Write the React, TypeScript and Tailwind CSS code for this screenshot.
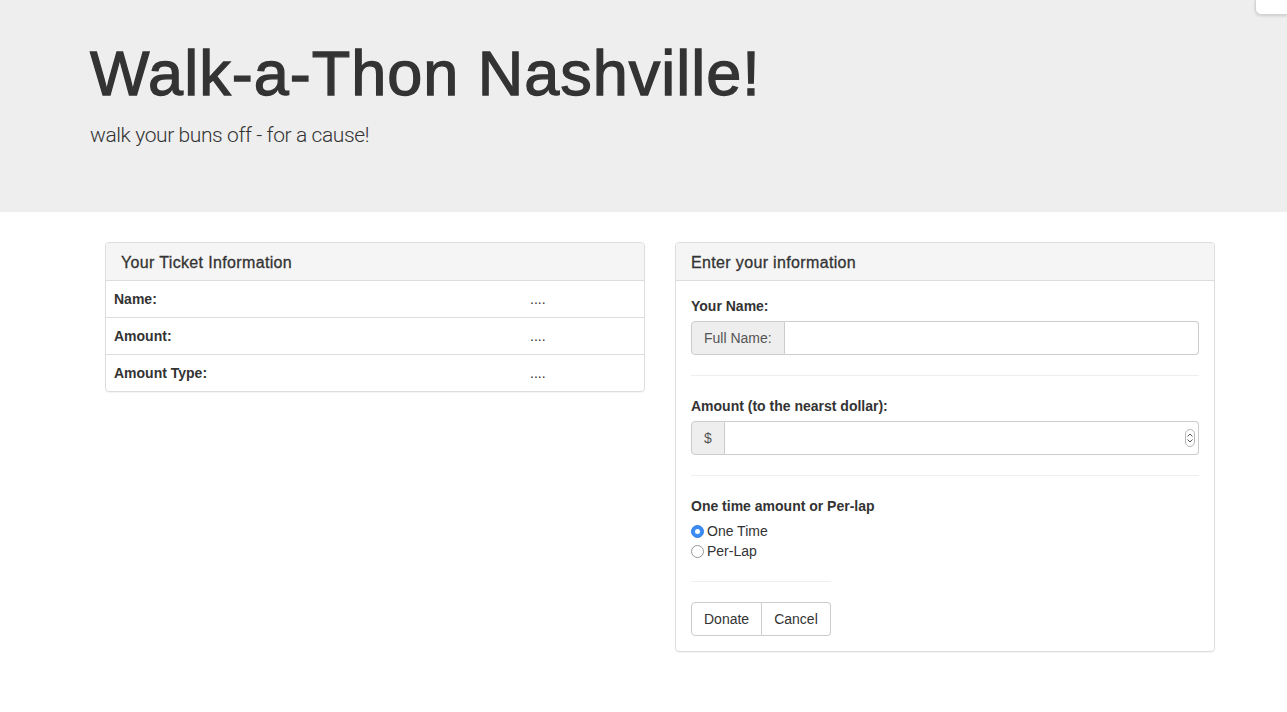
import React from 'react'

// Walk-a-Thon donation page

const font = { fontFamily: '"Liberation Sans", Arial, Helvetica, sans-serif' }

const Radio = ({ checked, label }: { checked?: boolean; label: string }) => (
  <label className="flex items-center h-5 leading-5">
    {checked ? (
      <span className="w-[13px] h-[13px] rounded-full bg-[#3b8cf5] border border-[#2f7de6] flex items-center justify-center mr-[3px]">
        <span className="w-[5px] h-[5px] rounded-full bg-white"></span>
      </span>
    ) : (
      <span className="w-[13px] h-[13px] rounded-full bg-white border border-[#9a9a9a] mr-[3px]"></span>
    )}
    <span>{label}</span>
  </label>
)

const Spinner = () => (
  <span className="w-[10px] h-[18px] rounded-[5px] border border-[#b8b8b8] flex flex-col items-center justify-center gap-[2px]">
    <svg width="6" height="4" viewBox="0 0 6 4"><path d="M0.5 3.5 L3 1 L5.5 3.5" fill="none" stroke="#555" strokeWidth="1" /></svg>
    <svg width="6" height="4" viewBox="0 0 6 4"><path d="M0.5 0.5 L3 3 L5.5 0.5" fill="none" stroke="#555" strokeWidth="1" /></svg>
  </span>
)

const PanelHeading = ({ children }: { children: React.ReactNode }) => (
  <div className="bg-[#f5f5f5] border-b border-[#dddddd] px-[15px] pt-[2px] h-[38px] flex items-center text-[16px] tracking-[0.35px] rounded-t-[3px]" style={{ WebkitTextStroke: '0.3px #333' }}>
    {children}
  </div>
)

export default () => {
  const rows = ['Name:', 'Amount:', 'Amount Type:']
  return (
    <div className="min-h-screen bg-white text-[#333] text-[14px] relative" style={font}>
      <div className="absolute top-0 right-0 w-[32px] h-[15px] bg-white rounded-bl-[6px] border-l border-b border-[#d4d4d4] shadow-[0_1px_3px_rgba(0,0,0,0.15)]"></div>

      <div className="bg-[#eeeeee] h-[212px] pl-[90px] pt-[39px]">
        <h1 className="text-[63px] leading-[69px] tracking-[1px]" style={{ WebkitTextStroke: '1.3px #333' }}>Walk-a-Thon Nashville!</h1>
        <p className="text-[21px] leading-[30px] mt-[12px] font-light tracking-[-0.4px]" style={{ fontFamily: 'Roboto, "Liberation Sans", sans-serif' }}>walk your buns off - for a cause!</p>
      </div>

      <div className="pl-[105px] pt-[30px] flex gap-[30px] items-start">
        <div className="w-[540px] border border-[#dddddd] rounded-[4px] shadow-[0_1px_1px_rgba(0,0,0,0.05)]">
          <PanelHeading>Your Ticket Information</PanelHeading>
          {rows.map((r, i) => (
            <div key={r} className={'flex leading-5 py-2 ' + (i > 0 ? 'border-t border-[#dddddd]' : '')}>
              <div className="w-[416px] px-2 font-bold">{r}</div>
              <div className="px-2">....</div>
            </div>
          ))}
        </div>

        <div className="w-[540px] border border-[#dddddd] rounded-[4px] shadow-[0_1px_1px_rgba(0,0,0,0.05)]">
          <PanelHeading>Enter your information</PanelHeading>
          <div className="p-[15px]">
            <div className="font-bold leading-5 mb-[5px]">Your Name:</div>
            <div className="flex h-[34px]">
              <span className="px-3 flex items-center bg-[#eeeeee] border border-[#cccccc] rounded-l-[4px] text-[#555]">Full Name:</span>
              <span className="flex-1 border border-l-0 border-[#cccccc] rounded-r-[4px] bg-white"></span>
            </div>
            <div className="border-t border-[#eeeeee] my-5"></div>

            <div className="font-bold leading-5 mb-[5px]">Amount (to the nearst dollar):</div>
            <div className="flex h-[34px]">
              <span className="px-3 flex items-center bg-[#eeeeee] border border-[#cccccc] rounded-l-[4px] text-[#555]">$</span>
              <span className="flex-1 border border-l-0 border-[#cccccc] rounded-r-[4px] bg-white flex items-center justify-end pr-[3px]">
                <Spinner />
              </span>
            </div>
            <div className="border-t border-[#eeeeee] my-5"></div>

            <div className="font-bold leading-5 mb-[5px]">One time amount or Per-lap</div>
            <Radio checked label="One Time" />
            <Radio label="Per-Lap" />
            <div className="border-t border-[#eeeeee] my-5 w-[140px]"></div>

            <div className="flex h-[34px]">
              <button className="px-3 border border-[#cccccc] rounded-l-[4px] bg-white">Donate</button>
              <button className="px-3 border border-l-0 border-[#cccccc] rounded-r-[4px] bg-white">Cancel</button>
            </div>
          </div>
        </div>
      </div>
    </div>
  )
}
